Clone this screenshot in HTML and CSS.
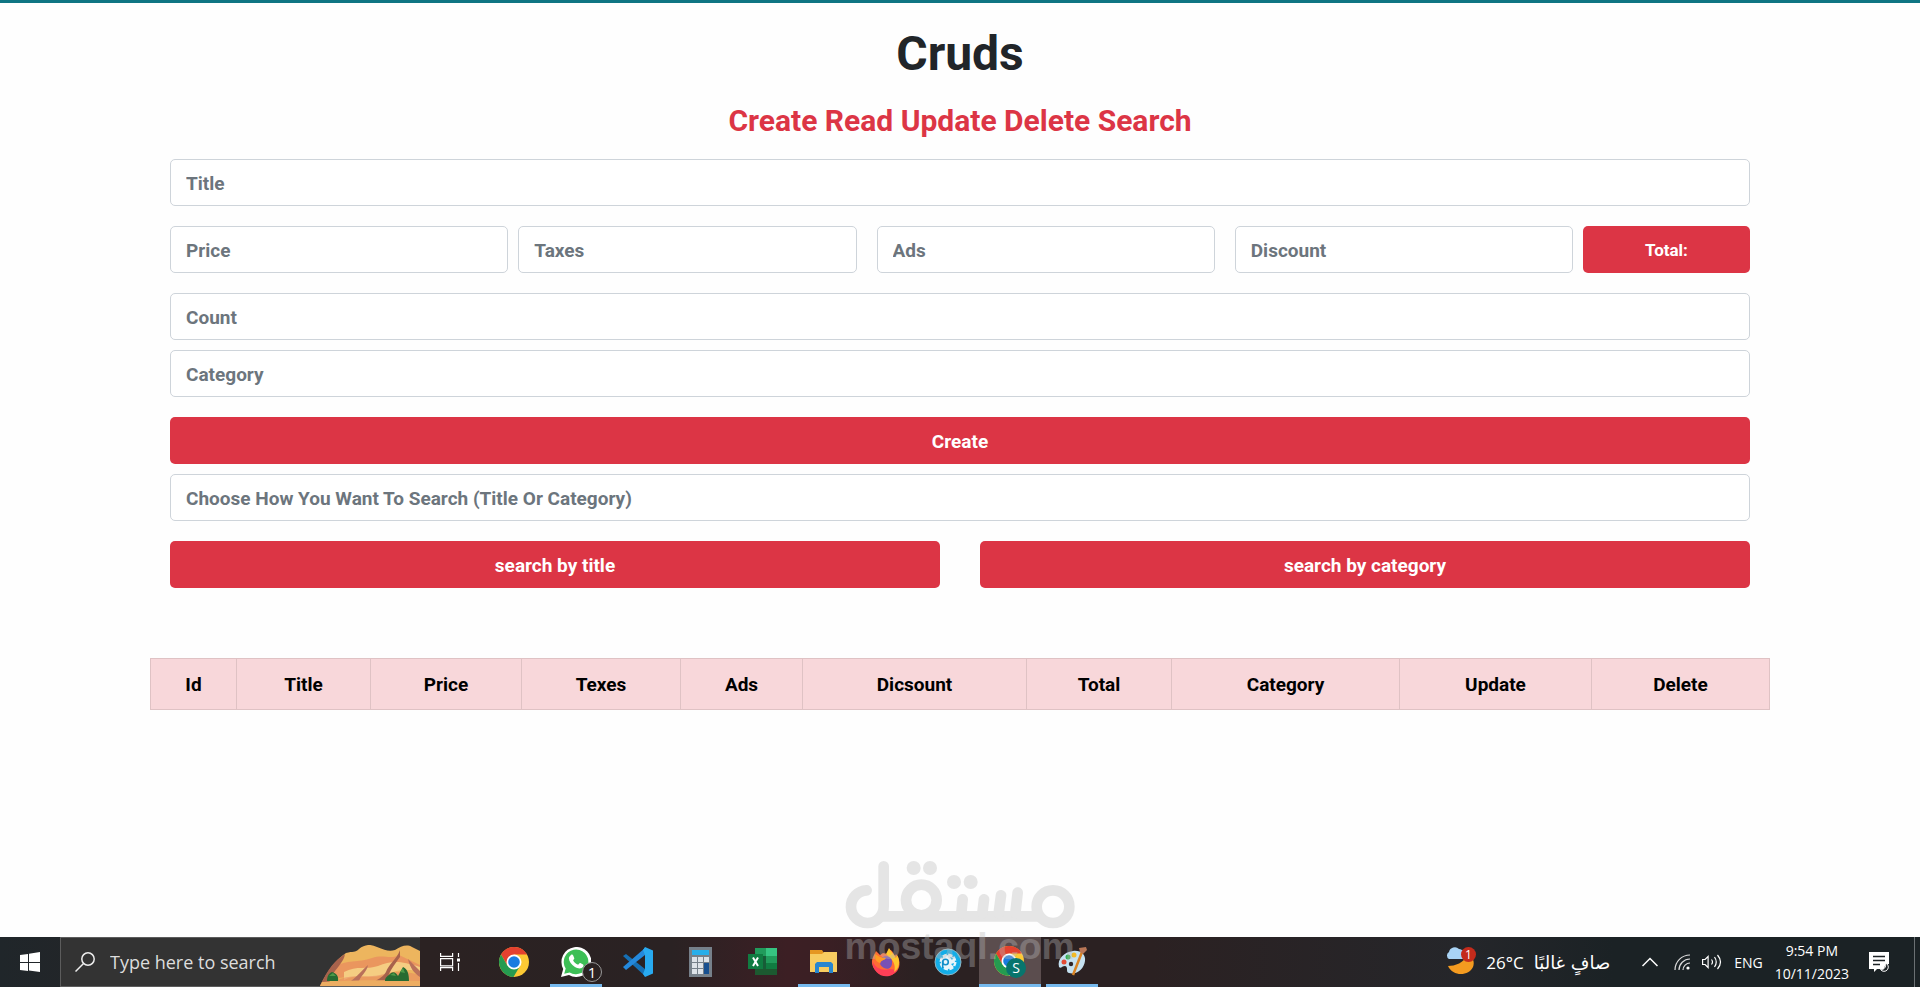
FILE: index.html
```html
<!DOCTYPE html>
<html lang="en">
<head>
    <meta charset="UTF-8">
    <meta name="viewport" content="width=device-width, initial-scale=1.0">
    <title>Cruds</title>
    <link rel="stylesheet" href="styles.css">
</head>
<body>
    <main class="page">
        <div class="container">
            <h1>Cruds</h1>
            <h2>Create Read Update Delete Search</h2>

            <form class="form">
                <input class="field" type="text" id="title" placeholder="Title" aria-label="Title">
                <div class="price-row">
                    <input class="field" type="text" id="price" placeholder="Price" aria-label="Price">
                    <input class="field" type="text" id="taxes" placeholder="Taxes" aria-label="Taxes">
                    <input class="field ads" type="text" id="ads" placeholder="Ads" aria-label="Ads">
                    <input class="field" type="text" id="discount" placeholder="Discount" aria-label="Discount">
                    <output class="total" id="total">Total:</output>
                </div>
                <div class="stack">
                    <input class="field" type="text" id="count" placeholder="Count" aria-label="Count">
                    <input class="field" type="text" id="category" placeholder="Category" aria-label="Category">
                </div>
                <div class="stack">
                    <button class="btn" type="button" id="create">Create</button>
                    <input class="field" type="text" id="search" placeholder="Choose How You Want To Search (Title Or Category)" aria-label="Search">
                </div>
                <div class="search-row">
                    <button class="btn" type="button">search by title</button>
                    <button class="btn" type="button">search by category</button>
                </div>
            </form>

            <table class="products">
                <thead>
                    <tr>
                        <th class="col-id">Id</th>
                        <th class="col-title">Title</th>
                        <th class="col-price">Price</th>
                        <th class="col-taxes">Texes</th>
                        <th class="col-ads">Ads</th>
                        <th class="col-discount">Dicsount</th>
                        <th class="col-total">Total</th>
                        <th class="col-category">Category</th>
                        <th class="col-update">Update</th>
                        <th class="col-delete">Delete</th>
                    </tr>
                </thead>
                <tbody></tbody>
            </table>
        </div>
    </main>

    <footer class="taskbar">
        <button class="start" type="button" aria-label="Start">
            <svg width="20" height="20" viewBox="0 0 20 20" fill="#fff"><path d="M0 3l8-1v8H0zM9 1.800 20 0v10H9zM0 11h8v8l-8-1zM9 11h11v9L9 18.500z"/></svg>
        </button>

        <div class="taskbar-search">
            <svg width="20" height="20" viewBox="0 0 20 20" fill="none" stroke="#eee" stroke-width="1.500"><circle cx="13" cy="7" r="6.200"/><path d="M8.500 11.500.5 19.500"/></svg>
            <input type="text" placeholder="Type here to search" aria-label="Type here to search">
            <svg class="dunes" width="100" height="41" viewBox="0 0 100 41">
                <path fill="#edb55e" d="M0 41C8 24 18 13 26 8c7-2 9 0 13-4 6-5 12-5 18-2 8 3 12 5 18 3 6-4 12-6 17-3l8 4v35z"/>
                <path fill="#e7825f" d="M14 22c13-8 24-4 38-9 12-4 18 2 27-3l21 10v6c-18-6-24 2-38 1-15-2-25 4-48 7z" opacity=".6"/>
                <path fill="#f5cd82" d="M24 27c13-7 23-2 34-6 13-5 21-6 42 1v4c-20-3-27 1-40 5-14 3-24-2-36 4z"/>
                <path fill="#e7825f" d="M20 34c14-5 26-1 40-4 14-4 26-4 40 0v7H16z" opacity=".5"/>
                <path fill="#a8624c" d="M0 41C8 24 14 16 25 9c-1 8-9 14-13 22l-3 7zM80 5c-3 9-12 15-14 22-4 7-9 6-13 12h14c-1-9 8-20 13-27z"/>
                <path fill="#b9705a" d="M48 20c-6 5-10 11-17 16h8c2-6 8-9 9-16zM88 14l12 12v6c-6-4-10-9-12-18z"/>
                <path fill="#edad62" d="M0 41l2-4c30-2 68-2 98-1v5z"/>
                <path fill="#276b31" d="M7 36c0-5 2-8 5-9 4 1 7 4 6 9zM65 36c0-4 3-5 6-8 3-2 6 1 7 3l5-9c5 2 6 8 6 14z"/>
                <path fill="#4d9948" d="M9 31l4-3 3 3zM70 30l4-2 2 3zM80 27l3-4 2 5z"/>
            </svg>
        </div>

        <button class="task-view" type="button" aria-label="Task view">
            <svg width="20" height="20" viewBox="0 0 20 20" fill="none" stroke="#fff" stroke-width="1.200"><path d="M.6 1v3.400h12V1M.6 19v-3.400h12V19M.6 6.600h12v7.200H.6zM18.500 1v4M18.500 11v8"/><path fill="#fff" stroke="none" d="M17 6.500h3v3h-3z"/></svg>
        </button>

        <nav class="apps" aria-label="Apps">
            <button class="app" type="button" aria-label="Chrome">
                <svg width="30" height="30" viewBox="0 0 30 30"><circle cx="15" cy="15" r="15" fill="#fcc934"/><path fill="#e3412f" d="M2 7.500a15 15 0 0 1 26 0H15l-6.500 11z"/><path fill="#259b50" d="M2 7.500a15 15 0 0 0 12.500 22.500L21 19l-6-4-6.500 3.700z"/><circle cx="15" cy="15" r="7.500" fill="#fff"/><circle cx="15" cy="15" r="5.800" fill="#1a7ce0"/></svg>
            </button>
            <button class="app open" type="button" aria-label="WhatsApp">
                <svg width="30" height="30" viewBox="0 0 30 30"><path fill="#fff" d="M0 30l2.200-8A15 15 0 1 1 8 28z"/><path fill="#3dbf56" d="M3.200 26.800l1.500-5.300a12.300 12.300 0 1 1 4 3.900z"/><path fill="#fff" d="M10 8c1-1 2 0 2.300.8l1 2.400c.2.700-.8 1.500-1.200 2 1.300 2.500 2.700 3.600 5 4.600.8-.6 1.300-2.200 2.300-1.700l2.700 1.300c.7.500.4 2-.5 2.900-2 2-5 1.200-8-.5-3-2-5.600-5.200-5.700-8.300 0-1.500 1-2.700 2.100-3.500z"/></svg>
                <span class="count">1</span>
            </button>
            <button class="app" type="button" aria-label="Visual Studio Code">
                <svg width="30" height="30" viewBox="0 0 30 30"><path fill="#1670b5" d="M0 9l3-2 19 15v7z"/><path fill="#2489dc" d="M0 20l3 3L22 8V1z"/><path fill="#28aaf0" d="M22 0l8 3.500v23L22 30l-2-3 2-5V8l-2-5z"/></svg>
            </button>
            <button class="app" type="button" aria-label="Calculator">
                <svg width="30" height="30" viewBox="0 0 30 30"><path fill="#76808a" d="M4 0h23v30H4z"/><path fill="#28aeea" d="M7 3h17v5H7z"/><path fill="#dde2e8" d="M7 10h5v5H7zm6 0h5v5h-5zm6 0h5v5h-5zM7 16h5v5H7zm6 0h5v5h-5zM7 22h5v5H7zm6 0h5v5h-5z"/><path fill="#174f90" d="M19 16h5v11h-5z"/></svg>
            </button>
            <button class="app" type="button" aria-label="Excel">
                <svg width="30" height="30" viewBox="0 0 30 30"><path fill="#219b5b" d="M8 1h11v8H8z"/><path fill="#36c481" d="M19 1h11v8H19z"/><path fill="#175c37" d="M8 9h11v19H8z"/><path fill="#219b5b" d="M19 9h11v7H19z"/><path fill="#107c41" d="M19 16h11v6H19z"/><path fill="#1c5930" d="M8 22h22v6H8z"/><path fill="#107c41" d="M1 7h15v15H1z"/><path stroke="#fff" stroke-width="2" d="M6 10.500l5 8.500M11 10.500L6 19"/></svg>
            </button>
            <button class="app open" type="button" aria-label="File Explorer">
                <svg width="30" height="30" viewBox="0 0 30 30"><path fill="#e59721" d="M1 3h12l2 3h12v6H1z"/><path fill="#f7cc60" d="M1 7h12l2-2h13v20H1z"/><path fill="#2786d0" d="M6 26V17l2-2h14l2 2v9h-4v-6H10v6z"/></svg>
            </button>
            <button class="app" type="button" aria-label="Firefox">
                <svg width="30" height="30" viewBox="0 0 30 30"><path fill="#ff6c35" d="M3 8l2-4 4 4 3-2 4 1 2-5 3 2 3 5 1-2c4 5 5 12 1 17-5 6-16 6-21 0C0 19 0 13 3 8z"/><path fill="#ff3f57" d="M1.500 14c3 8 11 10 17 8l8 1c-5 8-16 8-21 2-3-3-4-7-4-11z"/><path fill="#ffc72e" d="M15 7l3-6c2 4 5 6 7 10l1-3c4 6 2 14-3 17 2-5 0-11-4-14z"/><path fill="#7851b5" d="M10 11c5-4 12-1 11 5 0 5-4 7-8 5-3-2-5-4-3-6z"/><path fill="#ff9b23" d="M4 7l5 3 6 1c-2 3-5 2-6 5-4-1-6-5-5-9z"/></svg>
            </button>
            <button class="app" type="button" aria-label="Settings tool">
                <svg width="30" height="30" viewBox="0 0 30 30"><circle cx="15" cy="15" r="13" fill="#13ade8" stroke="#8eb5c4"/><circle cx="15" cy="15" r="7" fill="#e8f5fa" stroke="#e8f5fa" stroke-width="3" stroke-dasharray="4 1.500"/><circle cx="12.500" cy="15" r="2.800" fill="none" stroke="#138fc9" stroke-width="1.600"/><path stroke="#138fc9" stroke-width="1.600" d="M9.700 14v7"/><path fill="#13ade8" d="M17 10l3 1-1 2zM18 17l3-1-1 3z"/></svg>
            </button>
            <button class="app open active" type="button" aria-label="Chrome profile">
                <svg width="32" height="32" viewBox="0 0 32 32"><circle cx="15" cy="15" r="15" fill="#fcc934"/><path fill="#e3412f" d="M2 7.500a15 15 0 0 1 26 0H15l-6.500 11z"/><path fill="#259b50" d="M2 7.500a15 15 0 0 0 12.500 22.500L21 19l-6-4-6.500 3.700z"/><circle cx="15" cy="15" r="7.500" fill="#fff"/><circle cx="15" cy="15" r="5.800" fill="#1a7ce0"/><circle cx="22" cy="22" r="10" fill="#08756d"/><text class="profile" x="22" y="27" text-anchor="middle">S</text></svg>
            </button>
            <button class="app open" type="button" aria-label="Paint">
                <svg width="30" height="30" viewBox="0 0 30 30"><path fill="#c5e1f1" d="M2 20C0 12 7 5 16 4c8-1 13 4 12 10-1 8-8 14-16 12-4-1 0-6-4-7-3 0-4 3-6 1z"/><circle cx="7" cy="15" r="2.500" fill="#e34b34"/><circle cx="11" cy="10" r="2.500" fill="#35ae46"/><circle cx="17" cy="8" r="2.500" fill="#f5b926"/><circle cx="14" cy="17" r="2.200" fill="#302426"/><path stroke="#d88324" stroke-width="2.500" d="M25 5L16 28"/><path fill="#b87656" d="M22 1l7-1 1 3-4 4-3-2z"/></svg>
            </button>
        </nav>

        <div class="tray">
            <div class="weather">
                <svg width="30" height="30" viewBox="0 0 30 30"><path fill="#f49b20" d="M2 19c7 0 16-3 20-12 5 3 7 8 5 13-4 9-20 10-25-1z"/><path fill="#a9d3f5" d="M3 12a4 4 0 0 1 0-7 6 6 0 0 1 10-3c5 1 6 3 5 10z"/><circle cx="22.500" cy="7.500" r="7.500" fill="#c42b1c"/><text class="alert" x="22.500" y="12" text-anchor="middle">1</text></svg>
                <span>26°C</span>
                <span class="sky" lang="ar" dir="rtl">صافٍ غالبًا</span>
            </div>
            <svg class="chevron" width="16" height="10" viewBox="0 0 16 10" fill="none" stroke="#fff" stroke-width="1.500"><path d="M.5 9L8 1.500 15.500 9"/></svg>
            <svg width="16" height="16" viewBox="0 0 16 16" fill="none" stroke="#ddd" stroke-width="1.200"><path d="M1 16A15 15 0 0 1 16 1M5 16A11 11 0 0 1 16 5M9 16a7 7 0 0 1 7-7"/><circle cx="14" cy="14" r="1.600" fill="#fff" stroke="none"/></svg>
            <svg width="20" height="16" viewBox="0 0 20 16" fill="none" stroke="#fff" stroke-width="1.200"><path d="M.6 5.500h2.500l3-3v11l-3-3H.6zM9.500 5.500q2 2.500 0 5M12.500 3q3.500 5 0 10M15.500 1q6 7 0 14"/></svg>
            <span class="lang">ENG</span>
            <div class="clock"><span>9:54 PM</span><span>10/11/2023</span></div>
            <svg width="20" height="20" viewBox="0 0 20 20"><path fill="#fff" d="M0 0h20v12a5 5 0 0 0-5 5H8l-3 3v-3H0z"/><path stroke="#1c2225" stroke-width="1.300" d="M4 4.500h12M4 8.500h12M4 12.500h7"/><path fill="#1c2225" stroke="#fff" d="M16.500 11a4.300 4.300 0 1 1-5 6.500c3.500.5 6-2.500 5-6.500z"/></svg>
            <span class="show-desktop"></span>
        </div>
    </footer>

    <svg class="watermark" width="280" height="147" viewBox="0 0 840 441" role="img" aria-label="mostaql.com">
        <g opacity=".36" fill="#bababa">
            <g fill="none" stroke="#bababa" stroke-width="32" stroke-linecap="round">
                <path d="M140 151a49 49 0 1 0 51 49V79"/>
                <circle cx="304" cy="180" r="46"/>
                <circle cx="699" cy="200" r="49"/>
                <path stroke-linecap="butt" d="M175 229h490"/>
                <path d="M428 178l-4 42M492 178l-5 42M543 166l-7 54M593 158l-7 62"/>
            </g>
            <circle cx="281" cy="84" r="21"/>
            <circle cx="330" cy="84" r="21"/>
            <circle cx="402" cy="126" r="21"/>
            <circle cx="452" cy="126" r="21"/>
            <text class="domain" x="419" y="357" text-anchor="middle">mostaql.com</text>
        </g>
    </svg>
</body>
</html>
```
FILE: styles.css
```css
:root {
    --red: #dc3545;
    --border: #ced4da;
    --muted: #6c757d;
    --underline: #76b9ed;
}

* {
    box-sizing: border-box;
}

body {
    margin: 0;
    min-height: 100vh;
    display: flex;
    flex-direction: column;
    position: relative;
    font-family: Roboto, "Liberation Sans", sans-serif;
    font-weight: 700;
    color: #212529;
    background: #fefefe;
}

button,
input {
    font: inherit;
}

.page {
    flex: 1;
    border-top: 3px solid #0f7583;
}

.container {
    max-width: 1620px;
    margin: 0 auto;
    padding-bottom: 20px;
}

h1,
h2 {
    margin: 0;
    text-align: center;
}

h1 {
    padding-top: 21px;
    font-size: 48px;
    line-height: 60px;
}

h2 {
    padding: 19px 0 20px;
    font-size: 30px;
    line-height: 36px;
    color: var(--red);
}

/* Form */
.form {
    display: flex;
    flex-direction: column;
    gap: 20px;
    padding: 0 20px;
}

.field {
    width: 100%;
    min-width: 0;
    height: 47px;
    padding: 2px 15px 0;
    font-size: 19px;
    color: #212529;
    background: #fff;
    border: 1px solid var(--border);
    border-radius: 5px;
}

.field::placeholder {
    color: var(--muted);
    opacity: 1;
}

.price-row {
    display: flex;
    gap: 10px;
}

.price-row .field {
    flex: 1;
}

.price-row .ads {
    margin: 0 10px;
}

.total {
    width: 167px;
    display: flex;
    align-items: center;
    justify-content: center;
    font-size: 17px;
    color: #fff;
    background: var(--red);
    border-radius: 5px;
}

.stack {
    display: flex;
    flex-direction: column;
    gap: 10px;
}

.btn {
    width: 100%;
    height: 47px;
    padding: 2px 15px 0;
    font-size: 19px;
    color: #fff;
    background: var(--red);
    border: 0;
    border-radius: 5px;
}

.search-row {
    display: flex;
    gap: 40px;
}

/* Products table */
.products {
    width: 100%;
    margin-top: 70px;
    table-layout: fixed;
    border-collapse: collapse;
    font-size: 19px;
    line-height: 30px;
    color: #000;
}

.products th {
    padding: 11px 10px 9px;
    text-align: center;
    background: #f8d7da;
    border: 1px solid #dfc2c4;
}

.col-id { width: 86px; }
.col-title { width: 134px; }
.col-price { width: 151px; }
.col-taxes { width: 159px; }
.col-ads { width: 122px; }
.col-discount { width: 224px; }
.col-total { width: 145px; }
.col-category { width: 228px; }
.col-update { width: 192px; }
.col-delete { width: 178px; }

/* Taskbar */
.taskbar {
    display: flex;
    height: 50px;
    font-family: "Open Sans", "Noto Sans", sans-serif;
    font-weight: 400;
    color: #fff;
    background: linear-gradient(to right, #20262a 0, #2b2222 22%, #2a2223 35%, #3c1f24 41%, #3a1f24 43%, #2b2122 48%, #2b2122 60%, #25262a 76%, #1b2225 84%);
}

.taskbar button {
    display: flex;
    align-items: center;
    justify-content: center;
    padding: 0;
    color: #fff;
    background: none;
    border: 0;
}

.start,
.task-view {
    width: 60px;
}

.taskbar-search {
    display: flex;
    align-items: center;
    width: 360px;
    padding-left: 14px;
    background: #333;
    border: 1px solid #5c5c5c;
    border-right: 0;
}

.taskbar-search input {
    flex: 1;
    min-width: 0;
    padding: 0 0 0 15px;
    font-size: 18px;
    color: #ddd;
    background: none;
    border: 0;
}

.taskbar-search input::placeholder {
    color: #ddd;
    opacity: 1;
}

.dunes {
    align-self: flex-end;
}

.apps {
    display: flex;
    margin-left: 3px;
}

.app {
    position: relative;
    width: 62px;
}

.app.open::after {
    content: "";
    position: absolute;
    left: 5px;
    right: 5px;
    bottom: 0;
    height: 3px;
    background: var(--underline);
}

.taskbar .active {
    background: #5b4d4e;
}

.app.active::after {
    left: 0;
    right: 0;
}

.count {
    position: absolute;
    right: 5px;
    bottom: 5px;
    width: 20px;
    height: 20px;
    font-size: 15px;
    line-height: 18px;
    background: #2b2222;
    border: 1px solid #999;
    border-radius: 50%;
}

.profile {
    font-size: 14px;
    fill: #fff;
}

.alert {
    font-size: 12px;
    fill: #fff;
}

.tray {
    display: flex;
    align-items: center;
    gap: 12px;
    margin-left: auto;
    font-size: 14px;
}

.weather {
    display: flex;
    align-items: center;
    gap: 10px;
    margin-right: 20px;
    font-size: 17px;
}

.sky {
    font-family: "DejaVu Sans", sans-serif;
    font-size: 18px;
}

.chevron {
    margin-right: 4px;
}

.clock {
    display: flex;
    flex-direction: column;
    line-height: 23px;
    text-align: center;
}

.tray .clock + svg {
    margin: 0 13px 0 8px;
}

.show-desktop {
    width: 6px;
    height: 50px;
    border-left: 1px solid #6b7073;
}

/* Watermark lies over the page and the taskbar */
.watermark {
    position: absolute;
    left: 50%;
    bottom: 0;
    transform: translateX(-50%);
    pointer-events: none;
}

.domain {
    font-family: "Liberation Sans", sans-serif;
    font-size: 112px;
    font-weight: 700;
}
```
